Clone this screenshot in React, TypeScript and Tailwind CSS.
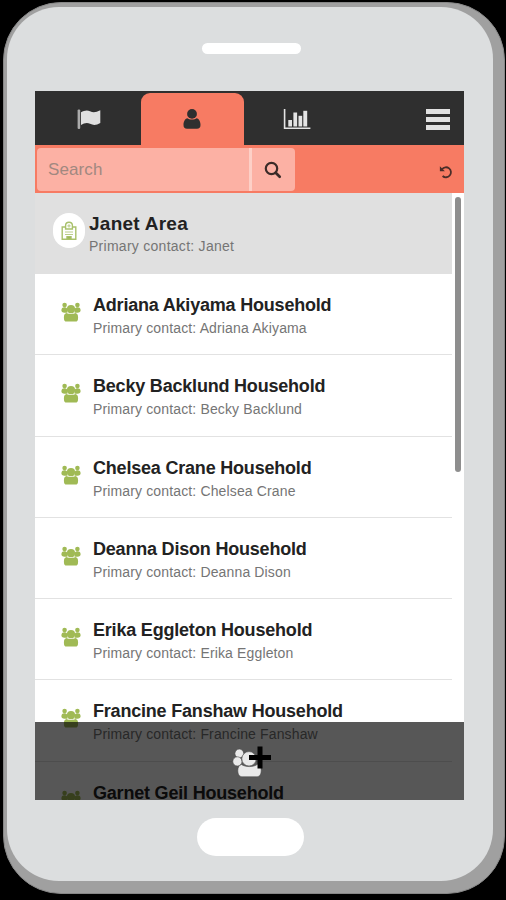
import React from 'react';

interface Household {
  name: string;
  contact?: string;
}

const households: Household[] = [
  { name: 'Adriana Akiyama Household', contact: 'Adriana Akiyama' },
  { name: 'Becky Backlund Household', contact: 'Becky Backlund' },
  { name: 'Chelsea Crane Household', contact: 'Chelsea Crane' },
  { name: 'Deanna Dison Household', contact: 'Deanna Dison' },
  { name: 'Erika Eggleton Household', contact: 'Erika Eggleton' },
  { name: 'Francine Fanshaw Household', contact: 'Francine Fanshaw' },
  { name: 'Garnet Geil Household' },
];

const FlagIcon = () => (
  <svg width="26" height="22" viewBox="0 0 26 22" fill="#e0e0e0">
    <rect x="1.6" y="1.5" width="2.6" height="19.5" rx="1" opacity="0.7" />
    <path d="M5 4.2C8 2.6 11 1.6 14 3.2c3.2 1.5 6 1.2 10.3-1v12.8c-3.8 2.3-7 2.4-10.3.8-3-1.5-6-.6-9 1.2z" />
  </svg>
);

const PersonIcon = () => (
  <svg width="18" height="22" viewBox="0 0 18 22" fill="#2f2f2f">
    <circle cx="9" cy="5.9" r="4.9" />
    <path d="M4.5 10.2C6 12 12 12 13.5 10.2c2.8.6 4 3.6 4 6.8 0 2.5-1.2 3.8-3.5 3.8H4C1.7 20.8.5 19.5.5 17c0-3.2 1.2-6.2 4-6.8z" />
  </svg>
);

const ChartIcon = () => (
  <svg width="28" height="22" viewBox="0 0 28 22" fill="#e4e4e4">
    <path d="M.8 1h1.6v18.4h25V21H.8z" />
    <rect x="5.3" y="12" width="3.7" height="6.5" />
    <rect x="10.4" y="4.5" width="3.7" height="14" />
    <rect x="15.5" y="7.8" width="3.7" height="10.7" />
    <rect x="20.3" y="2.8" width="3.9" height="15.7" />
  </svg>
);

const SearchIcon = () => (
  <svg width="18" height="18" viewBox="0 0 18 18" fill="none" stroke="#3b2b28">
    <circle cx="7.5" cy="7.5" r="5.7" strokeWidth="2.2" />
    <path d="M11.7 11.7l4 4" strokeWidth="2.7" strokeLinecap="round" />
  </svg>
);

const UndoIcon = () => (
  <svg width="14" height="14" viewBox="0 0 14 14" fill="none" stroke="#4a2e29" strokeWidth="1.8">
    <path d="M3 4.2A5 5 0 1 1 3.6 11" />
    <path d="M.9 1.2v5h5z" fill="#4a2e29" stroke="none" />
  </svg>
);

const PeopleIcon = () => (
  <svg width="20" height="20" viewBox="0 0 20 20" fill="#a0ba55">
    <circle cx="3.6" cy="3" r="2.3" />
    <circle cx="16.4" cy="3" r="2.3" />
    <path d="M.4 8.4c0-2.200 1-3.200 3-3.200 1.400 0 2.500.6 3 1.500v4H3.500C1.400 10.600.4 9.600.4 8.400zM19.600 8.400c0-2.200-1-3.200-3-3.200-1.400 0-2.500.6-3 1.500v4h2.900c2.100-.1 3.100-1.100 3.100-2.300z" />
    <circle cx="10" cy="7.2" r="4.1" />
    <path d="M5.8 11.100c2 1.200 6.400 1.200 8.400 0 2 .4 2.900 1.600 2.900 4.300 0 3-.7 4.200-2.800 4.200H5.700c-2.100 0-2.800-1.200-2.800-4.200 0-2.700.9-3.900 2.900-4.300z" />
  </svg>
);

const ClinicIcon = () => (
  <svg width="18" height="20" viewBox="0 0 18 20" fill="none" stroke="#a9c16c" strokeWidth="1.4">
    <path d="M5.2 6H2.2v12.3h13.6V6h-3" />
    <path d="M5.6 8V4.6a3.4 3.4 0 0 1 6.8 0V8z" />
    <path d="M9 3.2v3.4M7.3 4.9h3.4M5 11h8M5 13.5h8" strokeWidth="0.8" />
    <path d="M7 18v-2.2h4V18z" fill="#94b14a" />
  </svg>
);

const AddPeopleIcon = () => (
  <svg width="40" height="34" viewBox="0 0 40 34">
    <g fill="#e9e9e9" stroke="#4a4a4a" strokeWidth="0.6">
      <circle cx="7.3" cy="7.5" r="4.4" />
      <circle cx="5.4" cy="15.4" r="4.6" />
      <circle cx="17" cy="12.8" r="7.2" />
      <path d="M9.5 18.5c4 2.8 12 2.8 16-.2 2.6.6 3.7 3 3.7 6.2 0 4.2-1.7 6.3-5 6.3H10.8c-3.3 0-5-2.1-5-6.3 0-3 1.2-5.3 3.7-6z" />
    </g>
    <path d="M28 .5v22M17 11.5h22" stroke="#000" strokeWidth="5" />
  </svg>
);

const TabBar = () => (
  <div className="flex h-[54px] shrink-0 items-end bg-[#2f2f2f]">
    <div className="flex h-[52px] w-[106px] items-center justify-center pl-[2px]">
      <FlagIcon />
    </div>
    <div className="flex h-[52px] w-[103px] items-center justify-center rounded-t-[9px] bg-[#f77b63] pr-px">
      <PersonIcon />
    </div>
    <div className="flex h-[52px] w-[106px] items-center justify-center">
      <ChartIcon />
    </div>
    <div className="flex h-[52px] flex-1 items-center justify-end pt-px pr-[14px]">
      <div className="flex w-6 flex-col gap-[3px]">
        <div className="h-[5px] bg-[#e2e2e2]" />
        <div className="h-[5px] bg-[#e2e2e2]" />
        <div className="h-[5px] bg-[#e2e2e2]" />
      </div>
    </div>
  </div>
);

const SearchBar = () => (
  <div className="flex h-[48px] shrink-0 items-center bg-[#f77b63] pr-[11px] pl-[2px]">
    <div className="flex h-[43px] w-[212px] items-center rounded-l-[4px] bg-[#fcb1a4] pt-[2px] pl-[11px] text-[17px] tracking-[0.1px] text-[#a18880]">
      Search
    </div>
    <div className="ml-[3px] flex h-[43px] w-[43px] items-center justify-center rounded-r-[4px] bg-[#fcb1a4] pt-[2px] pr-[2px] shadow-[-3px_0_0_#fdd0c7]">
      <SearchIcon />
    </div>
    <div className="ml-auto pt-[5px]">
      <UndoIcon />
    </div>
  </div>
);

const HouseholdRow: React.FC<{ household: Household }> = ({ household }) => (
  <div className="flex h-[81.3px] shrink-0 border-b border-[#e2e2e2] pt-[20px] pl-[26px]">
    <div className="w-[32px] pt-[8px]">
      <PeopleIcon />
    </div>
    <div className="whitespace-nowrap">
      <div className="text-[18px] leading-[23px] font-bold tracking-[-0.2px] text-[#222]">{household.name}</div>
      {household.contact && (
        <div className="text-[14px] leading-[22px] tracking-[0.14px] text-[#757575]">Primary contact: {household.contact}</div>
      )}
    </div>
  </div>
);

const App: React.FC = () => (
  <div className="h-[900px] w-[506px] overflow-hidden bg-black pt-[2px] pl-[3px] font-['Liberation_Sans',Arial,sans-serif]">
    {/* Phone shell */}
    <div className="h-[892px] w-[502px] rounded-[58px] border border-[#878787] bg-[#a0a0a0] pt-[4px] pl-[3px]">
      <div className="flex h-[874px] w-[486px] flex-col items-center rounded-[52px] bg-[#dcdedf] pt-[36px]">
        <div className="ml-[2px] h-[11px] w-[99px] shrink-0 rounded-full bg-white" />
        <div className="relative mt-[37px] ml-[28px] flex h-[709px] w-[429px] shrink-0 flex-col self-start overflow-hidden bg-white">
          <TabBar />
          <SearchBar />
          <div className="flex min-h-0 flex-1 overflow-hidden">
            <div className="flex w-[417px] shrink-0 flex-col">
              <div className="flex h-[81px] shrink-0 bg-[#e0e0e0] pt-[19px] pl-[18px]">
                <div className="mt-px flex h-[35px] w-[32px] items-center justify-center rounded-full bg-white">
                  <ClinicIcon />
                </div>
                <div className="ml-[4px] whitespace-nowrap">
                  <div className="text-[19px] leading-[23px] font-bold tracking-[0.25px] text-[#222]">Janet Area</div>
                  <div className="text-[14px] leading-[23px] tracking-[0.27px] text-[#757575]">Primary contact: Janet</div>
                </div>
              </div>
              {households.map((household) => (
                <HouseholdRow key={household.name} household={household} />
              ))}
            </div>
            <div className="mt-[4px] ml-[3px] h-[275px] w-[6px] rounded-full bg-[#8e8e8e]" />
          </div>
          {/* Action bar floats over the list */}
          <div className="absolute inset-x-0 bottom-0 flex h-[78px] justify-center bg-black/66 pt-[24px] pl-[5px]">
            <AddPeopleIcon />
          </div>
        </div>
        <div className="mt-[18px] h-[38px] w-[107px] shrink-0 rounded-full bg-white" />
      </div>
    </div>
  </div>
);

export default App;
